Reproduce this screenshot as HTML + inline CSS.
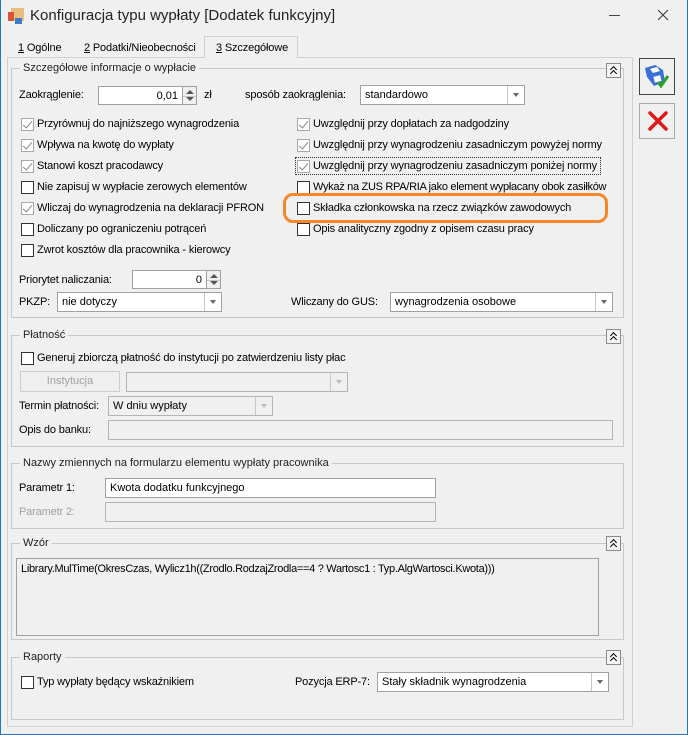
<!DOCTYPE html>
<html><head><meta charset="utf-8"><style>
*{box-sizing:border-box;margin:0;padding:0}
body{width:688px;height:735px;background:#f0f0f0;font-family:"Liberation Sans",sans-serif;font-size:11px;color:#000;position:relative;overflow:hidden}
.a{position:absolute;white-space:nowrap}
.win{position:absolute;left:0;top:0;width:688px;height:735px;border:1px solid #1979ca;border-top:none}
.grp{position:absolute;border:1px solid #c8c8c8}
.gt{position:absolute;top:-7px;left:8px;background:#f0f0f0;padding:0 3px;color:#222;line-height:13px}
.col{position:absolute;width:15px;height:15px;border:1px solid #8a8a8a;background:#f4f4f4}
.col::before,.col::after{content:"";position:absolute;left:4px;width:4px;height:4px;border-left:1.5px solid #000;border-top:1.5px solid #000;transform:rotate(45deg)}
.col::before{top:3px}.col::after{top:7px}
.cb{position:absolute;width:13px;height:13px;border:1px solid #333;background:#fff}
.cb.c{border-color:#a8a8a8}
.cb.c::after{content:"";position:absolute;left:3px;top:0px;width:4px;height:8px;border-right:1.5px solid #888;border-bottom:1.5px solid #888;transform:rotate(40deg)}
.inp{position:absolute;border:1px solid #a0a0a0;background:#fff;padding-left:4px;line-height:18px}
.dis{background:#f0f0f0;border-color:#b4b4b4}
.dd{position:absolute;right:0;top:0;bottom:0;width:17px;border-left:1px solid #c8c8c8}
.dd::after{content:"";position:absolute;left:5px;top:7px;border-left:3.5px solid transparent;border-right:3.5px solid transparent;border-top:4px solid #666}
.dis .dd::after{border-top-color:#bbb}
.sp{position:absolute;width:15px;border:1px solid #a0a0a0;background:#f0f0f0}
.sp::before{content:"";position:absolute;left:3px;top:3px;border-left:4px solid transparent;border-right:4px solid transparent;border-bottom:4px solid #555}
.sp::after{content:"";position:absolute;left:3px;bottom:3px;border-left:4px solid transparent;border-right:4px solid transparent;border-top:4px solid #555}
.sp i{position:absolute;left:0;right:0;top:50%;border-top:1px solid #c8c8c8}
.t{line-height:13px;letter-spacing:-0.15px}
</style></head><body>
<div class="win"></div>
<!-- title -->
<div class="a" style="left:11px;top:8px;width:13px;height:13px;background:#e8bd7d"></div>
<div class="a" style="left:8px;top:12px;width:6px;height:9px;background:#d8553a"></div>
<div class="a" style="left:15px;top:18px;width:7px;height:6px;background:#3d7cc9"></div>
<div class="a" style="left:30px;top:7px;font-size:15px;color:#222">Konfiguracja typu wypłaty [Dodatek funkcyjny]</div>
<div class="a" style="left:609px;top:15px;width:11px;border-top:1px solid #444"></div>
<svg class="a" style="left:657px;top:9px" width="12" height="12"><path d="M1 1L11 11M11 1L1 11" stroke="#444" stroke-width="1.2"/></svg>
<!-- tabs -->
<div class="a" style="left:7px;top:57px;width:626px;height:670px;border:1px solid #d0d0d0"></div>
<div class="a" style="left:204px;top:36px;width:94px;height:22px;border:1px solid #d0d0d0;border-bottom:none;background:#f0f0f0"></div>
<div class="a t" style="left:18px;top:42px"><u>1</u> Ogólne</div>
<div class="a t" style="left:84px;top:42px"><u>2</u> Podatki/Nieobecności</div>
<div class="a t" style="left:216px;top:42px"><u>3</u> Szczegółowe</div>
<!-- right buttons -->
<div class="a" style="left:639px;top:58px;width:36px;height:37px;border:1px solid #444"></div>
<svg class="a" style="left:643px;top:62px" width="28" height="28" viewBox="0 0 28 28"><path d="M2 6 L12 3 L20 8 L22 20 L11 24 L4 15 Z" fill="#3b6fd8"/><path d="M7 7 L14 5 L17 9 L10 11 Z" fill="#fff"/><rect x="11" y="14" width="7" height="6" fill="#fff" transform="rotate(-15 14 17)"/><path d="M15 20 L18 24 L25 14" stroke="#2aa52a" stroke-width="3" fill="none"/></svg>
<div class="a" style="left:639px;top:103px;width:36px;height:36px;border:1px solid #aaa"></div>
<svg class="a" style="left:647px;top:110px" width="22" height="22"><path d="M3 3 L19 19 M19 3 L3 19" stroke="#e01818" stroke-width="3.5" stroke-linecap="round"/></svg>

<!-- group 1 -->
<div class="grp" style="left:11px;top:68px;width:613px;height:250px"><div class="gt">Szczegółowe informacje o wypłacie</div></div>
<div class="col a" style="left:606px;top:63px"></div>
<div class="a t" style="left:19px;top:89px">Zaokrąglenie:</div>
<div class="inp" style="left:98px;top:86px;width:85px;height:19px;text-align:right;padding-right:4px">0,01</div>
<div class="sp" style="left:182px;top:86px;height:19px"><i></i></div>
<div class="a t" style="left:204px;top:89px">zł</div>
<div class="a t" style="left:245px;top:89px">sposób zaokrąglenia:</div>
<div class="inp" style="left:360px;top:85px;width:165px;height:20px">standardowo<div class="dd"></div></div>

<div class="cb c" style="left:21px;top:118px"></div><div class="a t" style="left:37px;top:118px">Przyrównuj do najniższego wynagrodzenia</div>
<div class="cb c" style="left:21px;top:139px"></div><div class="a t" style="left:37px;top:139px">Wpływa na kwotę do wypłaty</div>
<div class="cb c" style="left:21px;top:160px"></div><div class="a t" style="left:37px;top:160px">Stanowi koszt pracodawcy</div>
<div class="cb" style="left:21px;top:181px"></div><div class="a t" style="left:37px;top:181px">Nie zapisuj w wypłacie zerowych elementów</div>
<div class="cb c" style="left:21px;top:202px"></div><div class="a t" style="left:37px;top:202px">Wliczaj do wynagrodzenia na deklaracji PFRON</div>
<div class="cb" style="left:21px;top:223px"></div><div class="a t" style="left:37px;top:223px">Doliczany po ograniczeniu potrąceń</div>
<div class="cb" style="left:21px;top:244px"></div><div class="a t" style="left:37px;top:244px">Zwrot kosztów dla pracownika - kierowcy</div>

<div class="cb c" style="left:297px;top:118px"></div><div class="a t" style="left:313px;top:118px">Uwzględnij przy dopłatach za nadgodziny</div>
<div class="cb c" style="left:297px;top:139px"></div><div class="a t" style="left:313px;top:139px">Uwzględnij przy wynagrodzeniu zasadniczym powyżej normy</div>
<div class="a" style="left:295px;top:157px;width:306px;height:18px;border:1px dotted #333"></div>
<div class="cb c" style="left:297px;top:160px"></div><div class="a t" style="left:313px;top:160px">Uwzględnij przy wynagrodzeniu zasadniczym poniżej normy</div>
<div class="cb" style="left:297px;top:181px"></div><div class="a t" style="left:313px;top:181px;letter-spacing:-0.3px">Wykaż na ZUS RPA/RIA jako element wypłacany obok zasiłków</div>
<div class="cb" style="left:297px;top:202px"></div><div class="a t" style="left:313px;top:202px">Składka członkowska na rzecz związków zawodowych</div>
<div class="cb" style="left:297px;top:223px"></div><div class="a t" style="left:313px;top:223px">Opis analityczny zgodny z opisem czasu pracy</div>
<div class="a" style="left:283px;top:193px;width:325px;height:30px;border:3px solid #f6872a;border-radius:10px"></div>

<div class="a t" style="left:19px;top:274px">Priorytet naliczania:</div>
<div class="inp" style="left:132px;top:270px;width:75px;height:19px;text-align:right;padding-right:4px">0</div>
<div class="sp" style="left:206px;top:270px;height:19px"><i></i></div>
<div class="a t" style="left:19px;top:296px">PKZP:</div>
<div class="inp" style="left:57px;top:292px;width:165px;height:20px">nie dotyczy<div class="dd"></div></div>
<div class="a t" style="left:291px;top:296px">Wliczany do GUS:</div>
<div class="inp" style="left:390px;top:292px;width:223px;height:20px">wynagrodzenia osobowe<div class="dd"></div></div>

<!-- Płatność -->
<div class="grp" style="left:11px;top:335px;width:613px;height:112px"><div class="gt">Płatność</div></div>
<div class="col a" style="left:606px;top:329px"></div>
<div class="cb" style="left:21px;top:352px"></div><div class="a t" style="left:37px;top:352px">Generuj zbiorczą płatność do instytucji po zatwierdzeniu listy płac</div>
<div class="a" style="left:20px;top:371px;width:100px;height:21px;border:1px solid #ccc;background:#efefef;color:#a0a0a0;text-align:center;line-height:19px">Instytucja</div>
<div class="inp dis" style="left:126px;top:372px;width:222px;height:20px"><div class="dd"></div></div>
<div class="a t" style="left:19px;top:400px">Termin płatności:</div>
<div class="inp dis" style="left:108px;top:396px;width:165px;height:20px">W dniu wypłaty<div class="dd"></div></div>
<div class="a t" style="left:19px;top:424px">Opis do banku:</div>
<div class="inp dis" style="left:108px;top:420px;width:505px;height:20px"></div>

<!-- Nazwy -->
<div class="grp" style="left:11px;top:463px;width:613px;height:66px"><div class="gt">Nazwy zmiennych na formularzu elementu wypłaty pracownika</div></div>
<div class="a t" style="left:19px;top:482px">Parametr 1:</div>
<div class="inp" style="left:105px;top:478px;width:331px;height:20px">Kwota dodatku funkcyjnego</div>
<div class="a t" style="left:19px;top:506px;color:#a0a0a0">Parametr 2:</div>
<div class="inp dis" style="left:105px;top:502px;width:331px;height:20px"></div>

<!-- Wzór -->
<div class="grp" style="left:11px;top:543px;width:613px;height:97px"><div class="gt">Wzór</div></div>
<div class="col a" style="left:606px;top:536px"></div>
<div class="a" style="left:16px;top:558px;width:583px;height:78px;border:1px solid #a0a0a0;padding:4px 0 0 4px;letter-spacing:-0.3px">Library.MulTime(OkresCzas, Wylicz1h((Zrodlo.RodzajZrodla==4 ? Wartosc1 : Typ.AlgWartosci.Kwota)))</div>

<!-- Raporty -->
<div class="grp" style="left:11px;top:657px;width:613px;height:63px"><div class="gt">Raporty</div></div>
<div class="col a" style="left:606px;top:650px"></div>
<div class="cb" style="left:21px;top:676px"></div><div class="a t" style="left:37px;top:676px">Typ wypłaty będący wskaźnikiem</div>
<div class="a t" style="left:295px;top:676px">Pozycja ERP-7:</div>
<div class="inp" style="left:377px;top:672px;width:232px;height:20px">Stały składnik wynagrodzenia<div class="dd"></div></div>
</body></html>
